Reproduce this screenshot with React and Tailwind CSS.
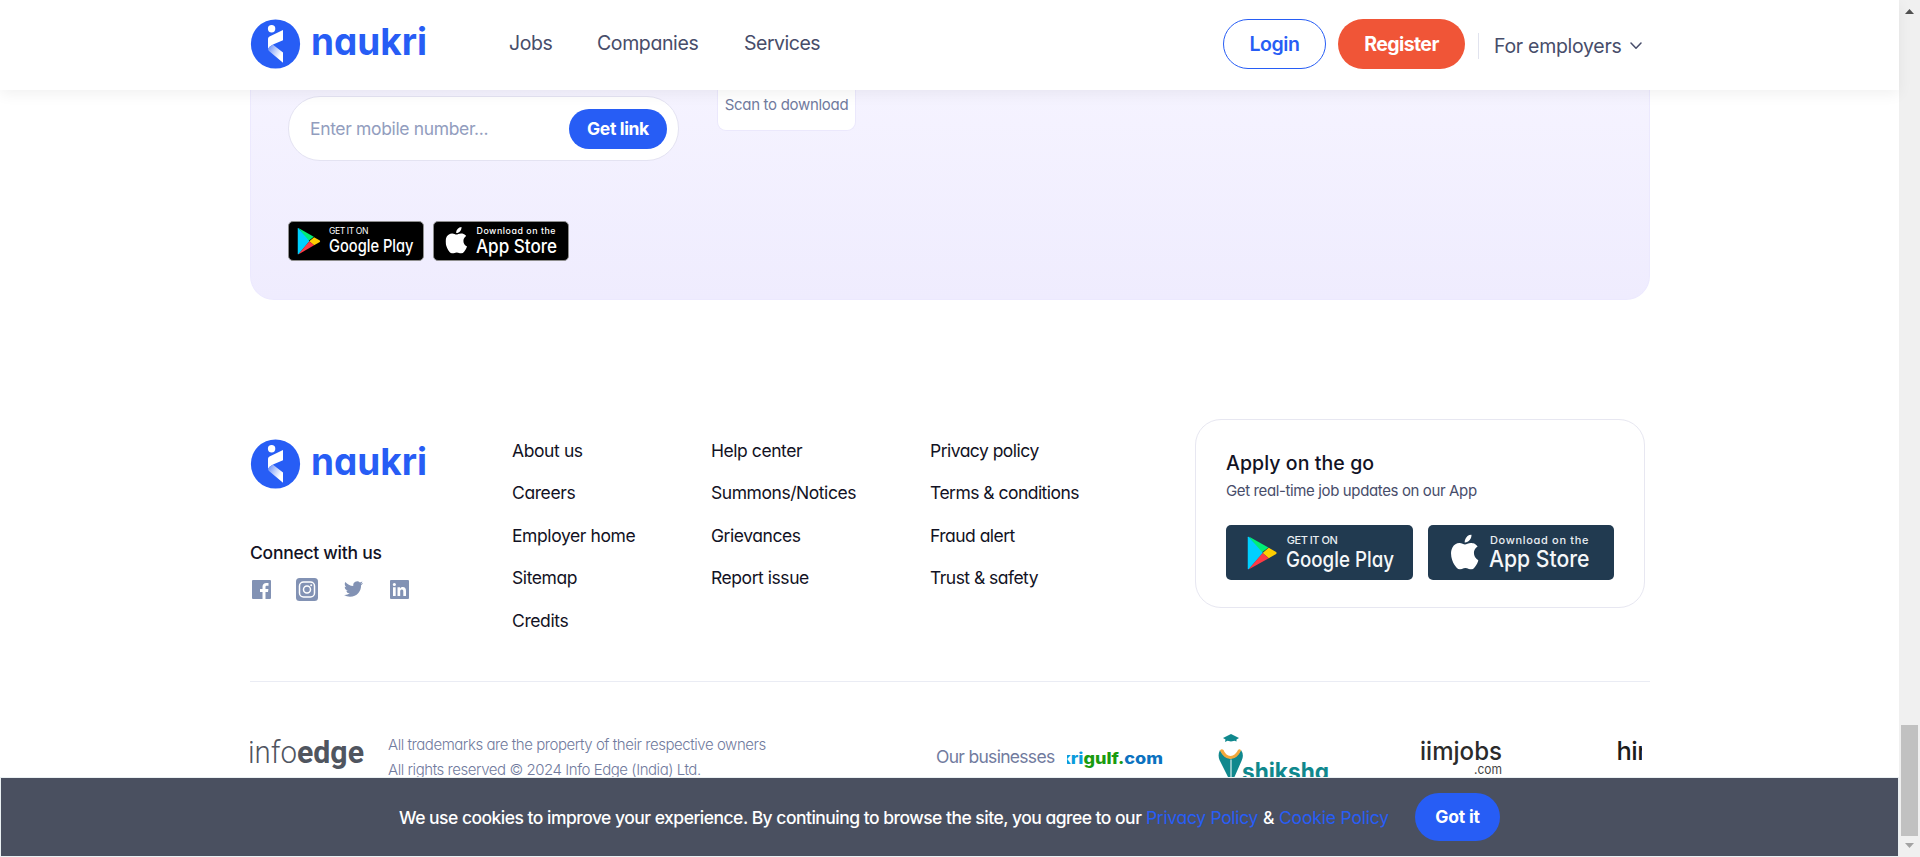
import React from "react";

const SANS = "font-['Inter','Liberation_Sans',sans-serif] [font-feature-settings:'cv11']";

function NaukriLogo() {
  return (
    <svg width="182" height="52" viewBox="0 0 182 52" className="block shrink-0 overflow-visible">
      <defs>
        <linearGradient id="fold" x1="0" y1="0.2" x2="1" y2="0.8">
          <stop offset="0" stopColor="#6f93f8" />
          <stop offset="0.35" stopColor="#b4c7fc" />
          <stop offset="0.8" stopColor="#ffffff" />
        </linearGradient>
      </defs>
      <circle cx="25.500" cy="26" r="24.600" fill="#275df5" />
      <circle cx="21.600" cy="10.700" r="3.700" fill="#fff" />
      <path d="M18 20.800 Q18 19.200 19.500 18.500 L33 12 V22.200 L23 26.500 Q19.500 28 18 31 Z" fill="#fff" />
      <path d="M18 30.500 Q19 28.500 23 26.700 L33 34.500 V44.800 L19 33 Q18 32.200 18 30.500 Z" fill="url(#fold)" />
      <text x="61" y="36.600" textLength="116" lengthAdjust="spacingAndGlyphs" fontSize="37.500" fontWeight="650" fill="#275df5">naukri</text>
    </svg>
  );
}

function PlayMark(props) {
  return (
    <svg viewBox="0 0 24 27" preserveAspectRatio="none" {...props}>
      <path d="M1 0 L17 9 L11 13.5 Z" fill="#00ee76" />
      <path d="M0 .6 Q0 0 .8 0 L12.5 13.5 L.8 27 Q0 27 0 26.4 Z" fill="#00d0ff" />
      <path d="M17.3 9.3 L23.3 12.7 Q24 13.5 23.3 14.3 L17.3 17.7 L12.3 13.5 Z" fill="#ffce00" />
      <path d="M.8 27 L12.3 13.5 L17.3 17.7 Z" fill="#ff3a44" />
    </svg>
  );
}

function AppleMark(props) {
  return (
    <svg viewBox="2.2 0 19.6 24" preserveAspectRatio="none" fill="#fff" {...props}>
      <path d="M12.152 6.896c-.948 0-2.415-1.078-3.96-1.04-2.04.027-3.91 1.183-4.961 3.014-2.117 3.675-.546 9.103 1.519 12.09 1.013 1.454 2.208 3.09 3.792 3.039 1.52-.065 2.09-.987 3.935-.987 1.831 0 2.35.987 3.96.948 1.637-.026 2.676-1.48 3.676-2.948 1.156-1.688 1.636-3.325 1.662-3.415-.039-.013-3.182-1.221-3.22-4.857-.026-3.04 2.48-4.494 2.597-4.559-1.429-2.09-3.623-2.324-4.39-2.376-2-.156-3.675 1.09-4.61 1.09zM15.53 3.83c.843-1.012 1.4-2.427 1.245-3.83-1.207.052-2.662.805-3.532 1.818-.78.896-1.454 2.338-1.273 3.714 1.338.104 2.715-.688 3.559-1.701" />
    </svg>
  );
}

function SmallPlayBadge() {
  return (
    <svg width="136" height="40" className="block overflow-visible">
      <rect x=".5" y=".5" width="135" height="39" rx="4.5" fill="#000" stroke="#8e8e8e" />
      <PlayMark x="9.5" y="7" width="23" height="26.5" />
      <text x="41" y="13" textLength="39.5" fontSize="8.6" fill="#fff">GET IT ON</text>
      <text x="41" y="30.500" textLength="84.500" lengthAdjust="spacingAndGlyphs" fontSize="17.500" fontWeight="450" fill="#fff">Google Play</text>
    </svg>
  );
}

function SmallAppBadge() {
  return (
    <svg width="136" height="40" className="block overflow-visible">
      <rect x=".5" y=".5" width="135" height="39" rx="4.5" fill="#000" stroke="#8e8e8e" />
      <AppleMark x="12.5" y="6" width="21.5" height="26.5" />
      <text x="43.5" y="13.3" textLength="79" fontSize="8.8" fontWeight="450" fill="#fff">Download on the</text>
      <text x="43" y="31.800" textLength="81" lengthAdjust="spacingAndGlyphs" fontSize="18.500" fontWeight="500" fill="#fff">App Store</text>
    </svg>
  );
}

function LargePlayBadge() {
  return (
    <svg width="187" height="55" className="block overflow-visible">
      <rect width="187" height="55" rx="5" fill="#213a50" />
      <PlayMark x="21.5" y="11.5" width="29.5" height="33" />
      <text x="60.8" y="19.3" textLength="51" fontSize="11" fontWeight="500" fill="#e9eef2">GET IT ON</text>
      <text x="60" y="41.6" textLength="108" lengthAdjust="spacingAndGlyphs" fontSize="22" fontWeight="500" fill="#f5f7f9">Google Play</text>
    </svg>
  );
}

function LargeAppBadge() {
  return (
    <svg width="186" height="55" className="block overflow-visible">
      <rect width="186" height="55" rx="5" fill="#213a50" />
      <AppleMark x="23" y="9.5" width="27.5" height="35" />
      <text x="62" y="18.800" textLength="98.5" fontSize="11" fontWeight="500" fill="#e9eef2">Download on the</text>
      <text x="61" y="41.6" textLength="100.5" lengthAdjust="spacingAndGlyphs" fontSize="23.500" fontWeight="500" fill="#f5f7f9">App Store</text>
    </svg>
  );
}

function Header() {
  return (
    <header className="relative z-10 flex h-[90px] shrink-0 bg-white pl-[250px] shadow-[0_4px_14px_rgba(0,0,0,0.06)]">
      <div className="pt-[18px]"><NaukriLogo /></div>
      <nav className="flex pt-[29px] pl-[77px] text-[19.5px] leading-[28px] tracking-[-0.02em] text-[#474d6a]">
        <a className="w-[88px]">Jobs</a>
        <a className="w-[147px]">Companies</a>
        <a className="w-[479px] tracking-[-0.025em]">Services</a>
      </nav>
      <div className="flex pt-[19px]">
        <button className="h-[50px] w-[103px] rounded-[25px] border border-[#275df5] pt-[2px] text-[19.5px] font-semibold tracking-[-0.02em] text-[#275df5]">Login</button>
        <button className="ml-[12px] h-[50px] w-[127px] rounded-[25px] bg-[#f05537] pt-[2px] text-[19.5px] font-bold tracking-[-0.03em] text-white">Register</button>
        <div className="ml-[13px] mt-[14px] h-[26px] w-px bg-[#e1e3ee]" />
        <div className="mt-[13px] flex h-[28px] items-center pl-[15px] text-[19.5px] leading-[28px] tracking-[-0.015em] text-[#474d6a]">
          <span className="w-[136px] whitespace-nowrap">For employers</span>
          <svg width="12" height="8" fill="none" stroke="#474d6a" strokeWidth="1.5" strokeLinecap="round" strokeLinejoin="round"><path d="M1 1 L6 6.3 L11 1" /></svg>
        </div>
      </div>
    </header>
  );
}

function Banner() {
  return (
    <section className="ml-[250px] h-[210px] w-[1400px] shrink-0 rounded-b-[24px] border border-t-0 border-[#ece9fe] bg-linear-to-b from-[#f5f3ff] to-[#efecfe] pl-[37px]">
      <div className="flex">
        <div className="mt-[6px] flex h-[65px] w-[391px] items-center rounded-[32px] border border-[#e4e3f2] bg-white pl-[21px] pr-[11px]">
          <span className="flex-1 pt-[2px] text-[17.5px] tracking-[-0.02em] text-[#929dbe]">Enter mobile number...</span>
          <button className="h-[40px] w-[98px] rounded-[20px] bg-[#275df5] pt-px text-[17.5px] font-bold tracking-[-0.02em] text-white">Get link</button>
        </div>
        <div className="ml-[38px] h-[41px] w-[139px] rounded-b-[9px] border border-t-0 border-[#ebe8fc] bg-white pt-[5px] text-center text-[15px] leading-[20px] tracking-[-0.02em] text-[#717b9e]">
          Scan to download
        </div>
      </div>
      <div className="mt-[60px] flex gap-[9px]">
        <SmallPlayBadge />
        <SmallAppBadge />
      </div>
    </section>
  );
}

const COLUMNS = [
  { width: "w-[199px]", tracking: "tracking-[-0.025em]", links: ["About us", "Careers", "Employer home", "Sitemap", "Credits"] },
  { width: "w-[219px]", tracking: "tracking-[-0.028em]", links: ["Help center", "Summons/Notices", "Grievances", "Report issue"] },
  { width: "w-[265px]", tracking: "tracking-[-0.033em]", links: ["Privacy policy", "Terms & conditions", "Fraud alert", "Trust & safety"] },
];

function Social() {
  return (
    <div className="mt-[11px] flex h-[24px] items-center">
      <svg width="19" height="19" viewBox="0 0 19 19" className="ml-[2px]" fill="#8292b4"><path d="M1 0h17a1 1 0 0 1 1 1v17a1 1 0 0 1-1 1h-4.500v-7.100h2.500l.4-3h-2.900V7.200c0-.9.300-1.400 1.500-1.400h1.500V3.100c-.3 0-1.200-.1-2.200-.1-2.300 0-3.800 1.400-3.800 3.800v2.100H8v3h2.500V19H1a1 1 0 0 1-1-1V1a1 1 0 0 1 1-1Z" /></svg>
      <svg width="22" height="23" viewBox="0 0 22 23" className="ml-[25px]"><rect width="22" height="23" rx="3.500" fill="#8292b4" /><rect x="3.500" y="4" width="15" height="15" rx="4" fill="none" stroke="#fff" strokeWidth="1.500" /><circle cx="11" cy="11.500" r="3.500" fill="none" stroke="#fff" strokeWidth="1.500" /><circle cx="15.200" cy="7.300" r="1" fill="#fff" /></svg>
      <svg width="19" height="16" viewBox="0 2 24 20" className="ml-[26px]" fill="#8292b4"><path d="M23.953 4.570a10 10 0 01-2.825.775 4.958 4.958 0 002.163-2.723c-.951.555-2.005.959-3.127 1.184a4.920 4.920 0 00-8.384 4.482C7.690 8.095 4.067 6.130 1.640 3.162a4.822 4.822 0 00-.666 2.475c0 1.710.870 3.213 2.188 4.096a4.904 4.904 0 01-2.228-.616v.060a4.923 4.923 0 003.946 4.827 4.996 4.996 0 01-2.212.085 4.936 4.936 0 004.604 3.417 9.867 9.867 0 01-6.102 2.105c-.390 0-.779-.023-1.170-.067a13.995 13.995 0 007.557 2.209c9.053 0 13.998-7.496 13.998-13.985 0-.210 0-.420-.015-.630A9.935 9.935 0 0024 4.590z" /></svg>
      <svg width="19" height="19" viewBox="0 0 19 19" className="ml-[27px]"><rect width="19" height="19" rx="1" fill="#8292b4" /><path d="M3 7.200h2.700V16H3zM4.350 2.900a1.600 1.600 0 1 1 0 3.200 1.600 1.600 0 0 1 0-3.200zM7.500 7.200h2.600v1.200c.4-.7 1.300-1.400 2.600-1.400 2.700 0 3.300 1.800 3.300 4.100V16h-2.700v-4.300c0-1 0-2.300-1.500-2.300s-1.600 1.100-1.600 2.300V16H7.500z" fill="#fff" /></svg>
    </div>
  );
}

function FooterTop() {
  return (
    <div className="ml-[250px] mt-[119px] flex h-[263px] w-[1400px] shrink-0 border-b border-[#eaecf4] text-[#121224]">
      <div className="w-[262px] pt-[19px]">
        <NaukriLogo />
        <div className="mt-[50px] text-[17.5px] font-medium leading-[26px] tracking-[-0.015em]">Connect with us</div>
        <Social />
      </div>
      {COLUMNS.map((col) => (
        <ul key={col.links[0]} className={`${col.width} ${col.tracking} pt-[10.500px]`}>
          {col.links.map((l) => (
            <li key={l} className="h-[42.500px] text-[17.5px] leading-[42.500px]">{l}</li>
          ))}
        </ul>
      ))}
      <div className="h-[189px] w-[450px] rounded-[26px] border border-[#e7e7f1] pl-[30px] pt-[29px]">
        <div className="text-[19.5px] font-medium leading-[28px] tracking-[0.004em]">Apply on the go</div>
        <div className="mt-[2px] text-[15px] leading-[24px] tracking-[-0.025em] text-[#474d6a]">Get real-time job updates on our App</div>
        <div className="mt-[22px] flex gap-[15px]">
          <LargePlayBadge />
          <LargeAppBadge />
        </div>
      </div>
    </div>
  );
}

function FooterBottom() {
  return (
    <div className="ml-[250px] flex h-[96px] w-[1400px] shrink-0 overflow-hidden">
      <svg width="115" height="45" className="mt-[51px] block shrink-0 overflow-visible">
        <text x="-2" y="29.500" textLength="49" lengthAdjust="spacingAndGlyphs" fontFamily="Roboto" fontSize="32" fontWeight="300" fill="#50555f">info</text>
        <text x="47" y="29.500" textLength="67" lengthAdjust="spacingAndGlyphs" fontFamily="Roboto" fontSize="32" fontWeight="700" fill="#50555f">edge</text>
      </svg>
      <div className="w-[571px] shrink-0 pl-[23px] pt-[50px] text-[15px] font-light leading-[25px] tracking-[-0.03em] text-[#717b9e]">
        <p>All trademarks are the property of their respective owners</p>
        <p>All rights reserved © 2024 Info Edge (India) Ltd.</p>
      </div>
      <div className="w-[131px] shrink-0 pt-[62px] text-[17.5px] leading-[26px] tracking-[-0.04em] text-[#717b9e]">Our businesses</div>
      <svg width="576" height="80" className="mt-[16px] block shrink-0">
        <defs>
          <clipPath id="track"><rect x="0" y="0" width="575" height="80" /></clipPath>
        </defs>
        <g clipPath="url(#track)">
          <text x="-7" y="65.500" textLength="103" lengthAdjust="spacingAndGlyphs" fontSize="16" fontWeight="800"><tspan fill="#0a9bdb">kri</tspan><tspan fill="#1a9b0f">gulf.</tspan><tspan fill="#0b72c0">com</tspan></text>
          <path d="M164 36 L156 40 L158.500 41.500 L158 44 L160.500 42.800 L164 43.500 L167.500 42.800 L169.500 43.500 V41.500 L172 40 Z" fill="#10888d" />
          <path d="M153 52 Q150.500 57 152.500 62 L161.500 80 H167 L174.500 63 Q177.500 57 174 52 Q170 60 163.500 60.500 Q157 60 153 52 Z" fill="#10888d" />
          <path d="M153 52.500 Q154.500 50.500 156.500 52 Q158.500 57.500 163.500 58 Q168.500 57.500 171 52 Q172.800 50.500 174 52.500 Q170.500 60.500 163.500 61 Q156.500 60.500 153 52.500 Z" fill="#f3a83c" />
          <path d="M164 61.500 V80" stroke="#fff" strokeWidth="1" />
          <text x="175" y="81.500" textLength="87" lengthAdjust="spacingAndGlyphs" fontSize="24" fontWeight="700" fill="#10888d">shiksha</text>
          <text x="353" y="61.500" textLength="82" lengthAdjust="spacingAndGlyphs" fontSize="25" fontWeight="450" fill="#2b2b2b">iimjobs</text>
          <text x="407" y="76" textLength="28" lengthAdjust="spacingAndGlyphs" fontSize="13.500" fill="#444">.com</text>
          <text x="549.500" y="62" fontSize="25.500" fontWeight="450" letterSpacing="-0.5" fill="#1c1c1c">hir</text>
        </g>
      </svg>
    </div>
  );
}

function CookieBar() {
  return (
    <div className="absolute bottom-0 left-0 z-20 flex h-[80px] w-[1899px] border border-[#eaf0f2] bg-[#4a5060] pl-[398px] text-[17.5px] text-white">
      <p className="flex w-[1016px] shrink-0 gap-[5px] whitespace-nowrap pt-[27px] leading-[26px]">
        <span className="w-[742px] font-medium tracking-[-0.0295em]">We use cookies to improve your experience. By continuing to browse the site, you agree to our</span>
        <a className="w-[112px] tracking-[-0.018em] text-[#275df5]">Privacy Policy</a>
        <span className="w-[11px] font-medium">&amp;</span>
        <a className="tracking-[-0.01em] text-[#275df5]">Cookie Policy</a>
      </p>
      <button className="mt-[15px] h-[48px] w-[85px] rounded-[24px] bg-[#275df5] font-bold tracking-[-0.01em]">Got it</button>
    </div>
  );
}

function Scrollbar() {
  return (
    <div className="flex w-[21px] flex-col items-center bg-[#f0f0f0]">
      <svg width="9" height="5" className="mt-[9px]"><path d="M0 5 L4.500 0 L9 5Z" fill="#505050" /></svg>
      <div className="mt-[711px] h-[111px] w-[17px] bg-[#c1c1c1]" />
      <svg width="9" height="5" className="mt-[7px]"><path d="M0 0 L4.500 5 L9 0Z" fill="#a3a3a3" /></svg>
    </div>
  );
}

export default function App() {
  return (
    <div className={`${SANS} relative flex h-[857px] w-[1920px] overflow-hidden bg-white`}>
      <main className="flex w-[1899px] flex-col">
        <Header />
        <Banner />
        <FooterTop />
        <FooterBottom />
      </main>
      <Scrollbar />
      <CookieBar />
    </div>
  );
}
